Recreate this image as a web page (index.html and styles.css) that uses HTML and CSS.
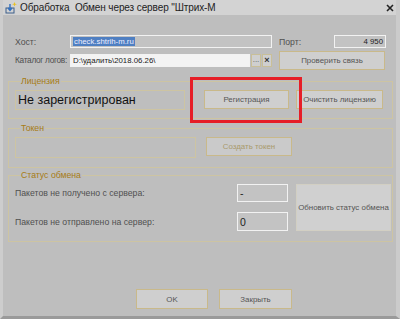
FILE: index.html
```html
<!DOCTYPE html>
<html lang="ru">
<head>
<meta charset="utf-8">
<title>Обработка Обмен через сервер</title>
<link rel="stylesheet" href="styles.css">
</head>
<body>
<div class="window">
  <div class="titlebar">
    <svg class="app-icon" width="12" height="12" viewBox="0 0 12 12">
      <rect x="1" y="6" width="8" height="5" fill="none" stroke="#3d5f8a" stroke-width="1"/>
      <path d="M5 2 V8 M3 6 L5 8.5 L7 6" fill="none" stroke="#2f6fc0" stroke-width="1.4"/>
      <path d="M9.5 0 L10.2 1.8 L12 2.2 L10.2 2.8 L9.5 4.6 L8.8 2.8 L7 2.2 L8.8 1.8 Z" fill="#e8c020"/>
    </svg>
    <span class="title">Обработка&nbsp; Обмен через сервер "Штрих-М</span>
    <svg class="close" width="8" height="8" viewBox="0 0 8 8">
      <path d="M1 1 L7 7 M7 1 L1 7" stroke="#222" stroke-width="1.6"/>
    </svg>
  </div>

  <div class="content">
    <div class="top-grid">
      <span class="label">Хост:</span>
      <div class="field field-gray"><span class="selected">check.shtrih-m.ru</span></div>
      <div class="port">
        <span class="label">Порт:</span>
        <div class="field field-gray port-field">4 950</div>
      </div>

      <span class="label label-tight">Каталог логов:</span>
      <div class="log-row">
        <div class="field field-white">D:\удалить\2018.06.26\</div>
        <span class="mini-btn">...</span>
        <span class="mini-btn mini-x">×</span>
      </div>
      <button class="btn btn-check">Проверить связь</button>
    </div>

    <fieldset class="group group-license">
      <legend>Лицензия</legend>
      <div class="license-row">
        <div class="box box-license">Не зарегистрирован</div>
        <button class="btn btn-reg">Регистрация</button>
        <button class="btn btn-clear">Очистить лицензию</button>
      </div>
    </fieldset>

    <fieldset class="group group-token">
      <legend>Токен</legend>
      <div class="token-row">
        <div class="box box-token"></div>
        <button class="btn btn-disabled">Создать токен</button>
      </div>
    </fieldset>

    <fieldset class="group group-status">
      <legend>Статус обмена</legend>
      <div class="status-grid">
        <span class="label status-l1">Пакетов не получено с сервера:</span>
        <div class="field field-gray stat-field stat-1">-</div>
        <span class="label status-l2">Пакетов не отправлено на сервер:</span>
        <div class="field field-gray stat-field stat-2">0</div>
        <button class="btn btn-refresh">Обновить статус обмена</button>
      </div>
    </fieldset>

    <div class="footer">
      <button class="btn btn-ok">OK</button>
      <button class="btn btn-close">Закрыть</button>
    </div>
  </div>

  <div class="highlight"></div>
</div>
</body>
</html>
```

FILE: styles.css
```css
* { box-sizing: border-box; }
html, body { margin: 0; padding: 0; background: #bdbdbd; }
body { font-family: "Liberation Sans", Arial, sans-serif; font-size: 8.7px; color: #4d4d4d; }

.window {
  position: relative;
  width: 400px;
  height: 319px;
  background: #bebebe;
  border-left: 3px solid #cdcdcd;
  border-right: 4px solid #cbcbcb;
  border-bottom: 3px solid #9a9a9a;
  overflow: hidden;
}

.titlebar {
  height: 15px;
  background: #d3d3d3;
  margin-left: -3px;
  margin-right: -4px;
  display: flex;
  align-items: center;
  padding-left: 5px;
}
.app-icon { flex: none; }
.title { margin-left: 3px; font-size: 10px; color: #222; letter-spacing: -0.1px; }
.close { margin-left: auto; margin-right: 6px; flex: none; }

.content { padding: 20px 0 0 5px; }

.label { color: #505050; white-space: nowrap; }
.label-tight { font-size: 8.3px; letter-spacing: -0.3px; }

.top-grid {
  display: grid;
  grid-template-columns: 55px 202px 114px;
  column-gap: 0;
  row-gap: 2px;
  margin-left: 7px;
  align-items: center;
}
.field {
  height: 13px;
  border: 1px solid #f2f2f2;
  display: flex;
  align-items: center;
  padding: 0 2px;
  font-size: 7.8px;
  color: #222;
  white-space: nowrap;
  overflow: hidden;
}
.field-gray { background: #c3c3c3; }
.field-white { background: #f3f3f3; flex: 1; }
.selected { background: #4f7fc2; color: #eef; padding: 0 1px; }

.port { display: flex; align-items: center; justify-content: space-between; margin-left: 7px; }
.port-field { width: 52px; justify-content: flex-end; }

.log-row { display: flex; align-items: center; height: 13px; }
.mini-btn {
  width: 10px; height: 13px;
  margin-left: 1px;
  background: #cfcfcf;
  border: 1px solid #c9bf98;
  font-size: 8px;
  line-height: 10px;
  text-align: center;
  color: #555;
}
.mini-x { font-weight: bold; color: #333; font-size: 9px; }

.btn {
  font-family: "Liberation Sans", Arial, sans-serif;
  font-size: 7.9px;
  color: #555;
  background: #cfcfcf;
  border: 1px solid #c9b98a;
  padding: 0;
  margin: 0;
  white-space: nowrap;
  cursor: default;
}
.btn-check { height: 19px; align-self: start; margin-top: 1px; margin-left: 7px; width: 106px; }

.group {
  margin: 0 3px 0 0;
  padding: 0;
  border: 1px solid #cdc4a2;
  min-width: 0;
}
.group legend {
  color: #a77c14;
  font-size: 8.7px;
  line-height: 10px;
  padding: 0 1px;
  margin-left: 5px;
}
.group-license { margin-top: 6px; padding: 4px 0 8px 6px; }
.license-row { display: flex; align-items: flex-start; }
.box { border: 1px solid #cdc4a2; }
.box-license {
  width: 170px; height: 20px;
  font-size: 12.5px; color: #111;
  display: flex; align-items: center; padding-left: 2px;
}
.btn-reg { width: 85px; height: 19px; margin-left: 19px; }
.btn-clear { width: 87px; height: 19px; margin-left: 7px; }

.group-token { margin-top: 4px; padding: 4px 0 9px 6px; }
.token-row { display: flex; align-items: flex-start; }
.box-token { width: 181px; height: 21px; }
.btn-disabled { width: 86px; height: 19px; margin-left: 10px; color: #a99a6c; background: #cacaca; }

.group-status { margin-top: 2px; padding: 4px 0 10px 6px; }
.status-grid {
  display: grid;
  grid-template-columns: 222px 51px 103px;
  grid-template-rows: 18px 19px;
  column-gap: 0;
  row-gap: 10px;
  align-items: center;
}
.stat-field { height: 100%; font-size: 10.5px; }
.status-l1 { grid-column: 1; grid-row: 1; }
.stat-1 { grid-column: 2; grid-row: 1; }
.status-l2 { grid-column: 1; grid-row: 2; }
.stat-2 { grid-column: 2; grid-row: 2; }
.btn-refresh { grid-column: 3; grid-row: 1 / 3; height: 47px; align-self: start; margin-left: 8px; width: 95px; border-color: #d2cfc3; background: #d0d0d0; }

.footer { display: flex; margin-top: 47px; padding-left: 128px; gap: 11px; }
.btn-ok { width: 72px; height: 20px; }
.btn-close { width: 73px; height: 20px; }

.highlight {
  position: absolute;
  left: 187px;
  top: 77px;
  width: 112px;
  height: 46px;
  border: 3px solid #e61e27;
}
```
